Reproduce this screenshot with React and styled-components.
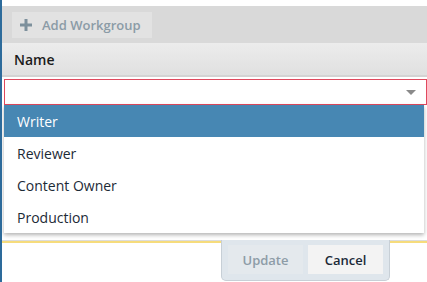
import React from 'react';
import styled, { createGlobalStyle } from 'styled-components';

const GlobalStyle = createGlobalStyle`
  body {
    margin: 0;
    background: #fff;
    font-family: 'Open Sans', 'Noto Sans', sans-serif;
  }
`;

const Page = styled.div`
  position: relative;
  height: 282px;
  overflow: hidden;
  border-left: 2px solid #2d6b9b;
  padding-top: 6px;
  box-sizing: border-box;
`;

const Toolbar = styled.div`
  display: flex;
  align-items: center;
  height: 37px;
  padding-left: 10px;
  background: #d9d9d9;
`;

const AddButton = styled.button`
  display: flex;
  align-items: center;
  gap: 10px;
  height: 26px;
  padding: 0 11px 0 8px;
  border: none;
  background: #e2e2e2;
  color: #8b9ba6;
  font-family: inherit;
  font-size: 13px;
  font-weight: 600;
`;

const HeaderRow = styled.div`
  display: flex;
  align-items: center;
  height: 32px;
  padding-left: 12px;
  background: linear-gradient(#ececec, #e0e0e0);
  border-bottom: 2px solid #d3d3d3;
  color: #1b1b1b;
  font-size: 14px;
  font-weight: 600;
`;

const EditRow = styled.div`
  position: relative;
  height: 164px;
  padding: 2px 0 0 2px;
  box-sizing: border-box;
  border-bottom: 1px solid #dcdcdc;
  box-shadow: 0 2px 0 #f6dc7c;
`;

const SelectBox = styled.div`
  display: flex;
  align-items: center;
  justify-content: flex-end;
  height: 26px;
  box-sizing: border-box;
  padding-right: 10px;
  border: 1px solid #e0495e;
  background: #fff;
`;

const Caret = styled.span`
  width: 0;
  height: 0;
  border-left: 5px solid transparent;
  border-right: 5px solid transparent;
  border-top: 5px solid #8a8a8a;
`;

const Menu = styled.ul`
  position: absolute;
  top: 28px;
  left: 2px;
  right: 3px;
  margin: 0;
  padding: 0;
  list-style: none;
  background: #fff;
  box-shadow: 0 2px 4px rgba(0, 0, 0, 0.3);
  z-index: 2;
`;

const Option = styled.li`
  height: 32px;
  display: flex;
  align-items: center;
  padding-left: 13px;
  font-size: 14px;
  color: ${(p) => (p.$active ? '#ffffff' : '#1c2a36')};
  background: ${(p) => (p.$active ? '#4787b3' : 'transparent')};
`;

const ActionPanel = styled.div`
  position: absolute;
  top: 240px;
  left: 219px;
  display: flex;
  gap: 5px;
  padding: 5px 6px 6px 6px;
  background: #dfe6ec;
  border: 1px solid #c7cfd6;
  border-top: none;
  border-radius: 0 0 5px 5px;
  z-index: 1;
`;

const ActionButton = styled.button`
  width: 75px;
  height: 29px;
  border: none;
  font-family: inherit;
  font-size: 13px;
  font-weight: 600;
  background: ${(p) => (p.$disabled ? '#e4e9ed' : '#f3f3f3')};
  color: ${(p) => (p.$disabled ? '#8d9ca7' : '#1b2a38')};
`;

const PlusIcon = () => (
  <svg width="12" height="12" viewBox="0 0 12 12">
    <rect x="4.5" y="0" width="3" height="12" fill="#7d909c" />
    <rect x="0" y="4.5" width="12" height="3" fill="#7d909c" />
  </svg>
);

const options = ['Writer', 'Reviewer', 'Content Owner', 'Production'];

const App = () => (
  <>
    <GlobalStyle />
    <Page>
      <Toolbar>
        <AddButton>
          <PlusIcon />
          Add Workgroup
        </AddButton>
      </Toolbar>
      <HeaderRow>Name</HeaderRow>
      <EditRow>
        <SelectBox>
          <Caret />
        </SelectBox>
        <Menu>
          {options.map((o, i) => (
            <Option key={o} $active={i === 0}>
              {o}
            </Option>
          ))}
        </Menu>
      </EditRow>
      <ActionPanel>
        <ActionButton $disabled>Update</ActionButton>
        <ActionButton>Cancel</ActionButton>
      </ActionPanel>
    </Page>
  </>
);

export default App;
